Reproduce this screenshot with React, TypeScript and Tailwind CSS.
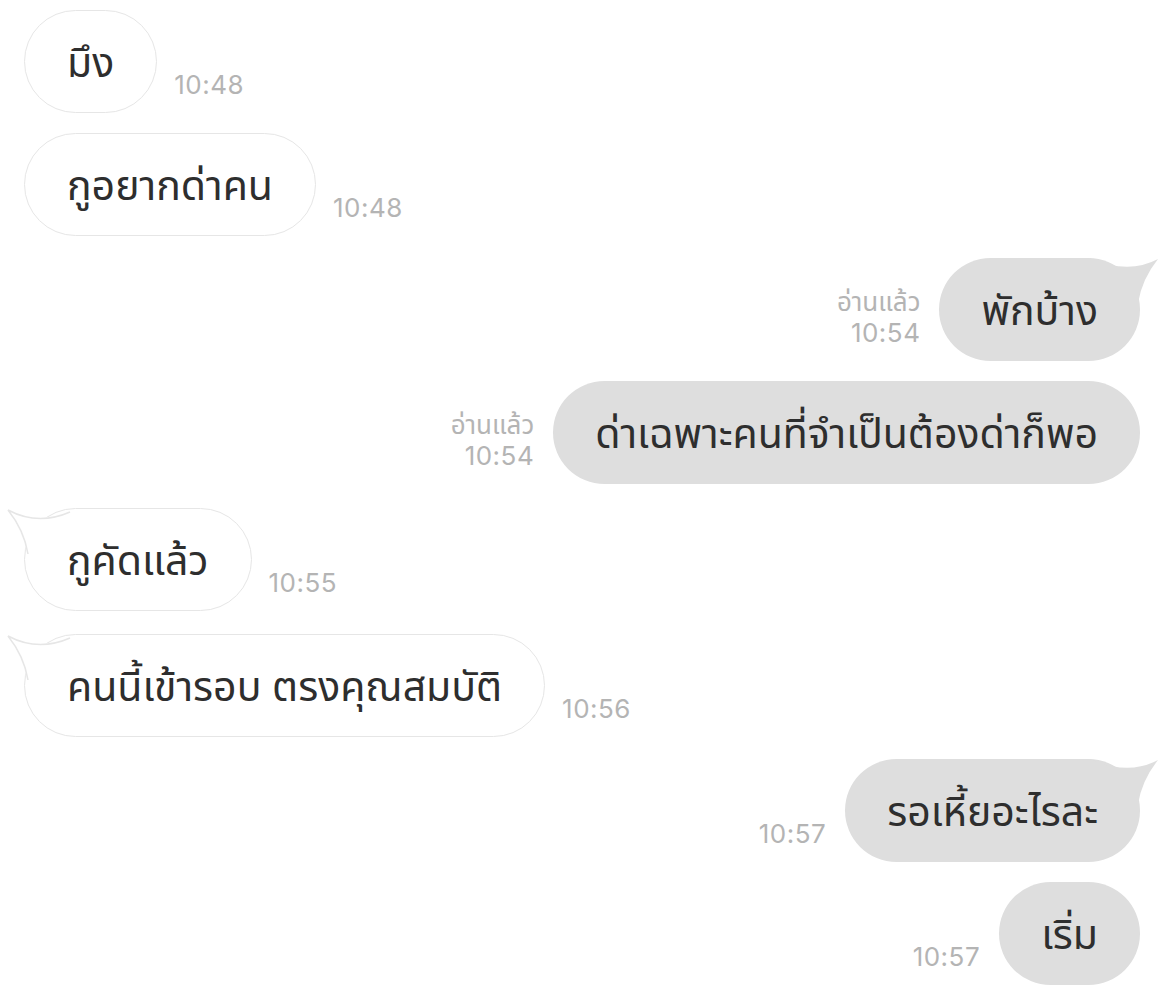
import React from "react";

type Msg = {
  side: "left" | "right";
  text: string;
  time: string;
  read?: boolean;
  tail?: boolean;
  mt: string;
};

const MESSAGES: Msg[] = [
  { side: "left", text: "มึง", time: "10:48", mt: "mt-0" },
  { side: "left", text: "กูอยากด่าคน", time: "10:48", mt: "mt-[20px]" },
  { side: "right", text: "พักบ้าง", time: "10:54", read: true, tail: true, mt: "mt-[22px]" },
  { side: "right", text: "ด่าเฉพาะคนที่จำเป็นต้องด่าก็พอ", time: "10:54", read: true, mt: "mt-[20px]" },
  { side: "left", text: "กูคัดแล้ว", time: "10:55", tail: true, mt: "mt-[24px]" },
  { side: "left", text: "คนนี้เข้ารอบ ตรงคุณสมบัติ", time: "10:56", tail: true, mt: "mt-[23px]" },
  { side: "right", text: "รอเหี้ยอะไรละ", time: "10:57", tail: true, mt: "mt-[22px]" },
  { side: "right", text: "เริ่ม", time: "10:57", mt: "mt-[20px]" },
];

const THAI = "font-['Noto_Sans_Thai','Noto_Sans_Thai_UI','Loma','Garuda','Noto_Sans',sans-serif]";

/** Little horn on the top corner of a bubble */
const Tail: React.FC<{ side: "left" | "right" }> = ({ side }) => {
  const fill = side === "right" ? "#dedede" : "#ffffff";
  return (
    <svg
      width="72"
      height="48"
      viewBox="0 0 72 48"
      className={
        side === "right"
          ? "absolute -right-[20px] -top-[1px]"
          : "absolute -left-[19px] -top-[1px] -scale-x-100"
      }
    >
      <path d="M2 1 Q40 18 70 2 Q54 22 50 46 L2 46 Z" fill={fill} />
      {side === "left" && (
        <path
          d="M8 4 Q40 18 70 2 Q54 22 50 46"
          fill="none"
          stroke="#e6e6e6"
          strokeWidth="1.5"
        />
      )}
    </svg>
  );
};

const Time: React.FC<{ msg: Msg }> = ({ msg }) => (
  <div
    className={`pb-[13px] text-[26px] leading-[30px] text-[#b4b4b4] ${
      msg.side === "right" ? "text-right" : "text-left"
    }`}
  >
    {msg.read && <div className={`${THAI} text-[26px]`}>อ่านแล้ว</div>}
    <div className="font-['Inter',sans-serif] tracking-[0.5px]">{msg.time}</div>
  </div>
);

const Bubble: React.FC<{ msg: Msg }> = ({ msg }) => (
  <div
    className={`relative flex h-[103px] items-center rounded-full px-[42px] pt-[6px] text-[41px] text-[#2e2e2e] ${THAI} ${
      msg.side === "right"
        ? "bg-[#dedede]"
        : "border-[1.5px] border-[#e6e6e6] bg-white"
    }`}
  >
    {msg.tail && <Tail side={msg.side} />}
    <span className="relative whitespace-nowrap">{msg.text}</span>
  </div>
);

export default function App() {
  return (
    <div className="min-h-[1005px] w-[1168px] overflow-hidden bg-white pl-[24px] pr-[28px] pt-[10px]">
      {MESSAGES.map((msg, i) => (
        <div
          key={i}
          className={`flex items-end ${msg.mt} ${
            msg.side === "right" ? "justify-end gap-[19px]" : "justify-start gap-[17px]"
          }`}
        >
          {msg.side === "right" && <Time msg={msg} />}
          <Bubble msg={msg} />
          {msg.side === "left" && <Time msg={msg} />}
        </div>
      ))}
    </div>
  );
}
